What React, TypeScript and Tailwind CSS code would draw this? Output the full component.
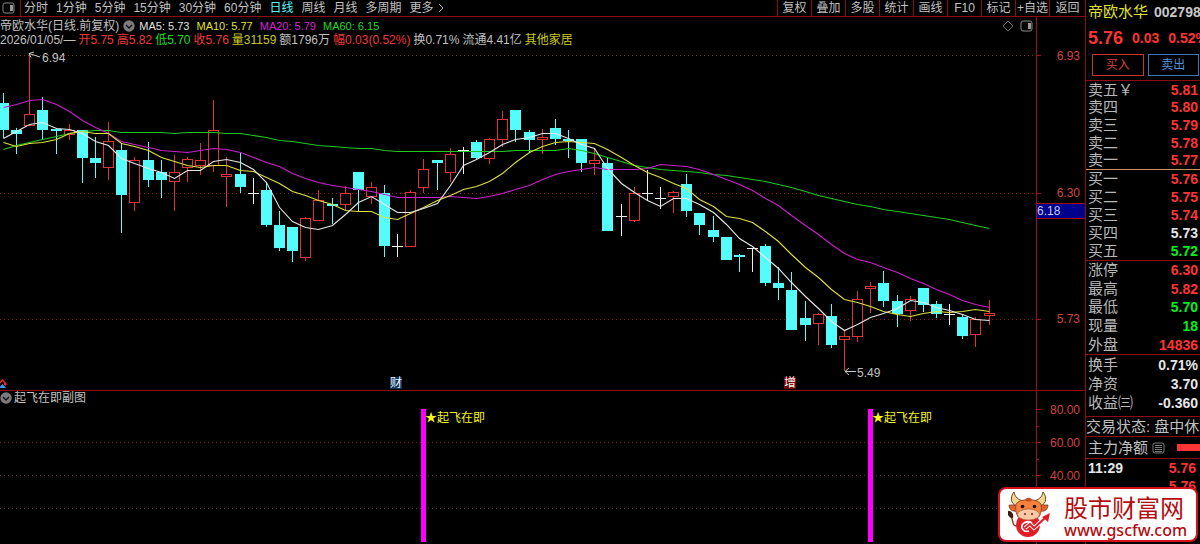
import React from "react";

type Kind = "c" | "r" | "w";
type Candle = [Kind, number, number, number, number];

// kind, high, body top, body bottom, low
const candles: Candle[] = [
  ["c", 93, 103, 130, 138], ["c", 128, 130, 134, 154], ["r", 53, 114, 125, 125], ["c", 97, 110, 130, 140],
  ["c", 128, 129, 131, 154], ["r", 124, 130, 134, 140], ["c", 130, 130, 158, 183], ["c", 137, 158, 163, 178],
  ["r", 122, 141, 167, 180], ["c", 143, 150, 195, 233], ["r", 157, 160, 202, 211], ["c", 142, 160, 180, 187],
  ["c", 160, 172, 180, 198], ["r", 155, 172, 181, 211], ["r", 157, 159, 167, 182], ["r", 143, 160, 165, 175],
  ["r", 100, 130, 165, 172], ["r", 157, 174, 176, 207], ["c", 152, 174, 187, 193], ["w", 178, 193, 193, 204],
  ["c", 182, 190, 225, 227], ["c", 211, 225, 248, 251], ["c", 227, 227, 251, 262], ["r", 217, 218, 257, 261],
  ["r", 190, 200, 220, 221], ["c", 198, 204, 206, 224], ["r", 186, 193, 204, 210], ["c", 172, 172, 190, 211],
  ["r", 182, 187, 196, 204], ["c", 185, 193, 246, 257], ["w", 234, 246, 246, 257], ["r", 190, 192, 246, 246],
  ["r", 159, 169, 187, 193], ["c", 160, 160, 163, 190], ["r", 148, 154, 172, 182], ["w", 147, 150, 150, 174],
  ["c", 140, 142, 158, 160], ["r", 138, 139, 158, 164], ["r", 111, 119, 139, 147], ["c", 110, 110, 130, 142],
  ["c", 130, 132, 140, 153], ["r", 129, 137, 139, 154], ["c", 119, 128, 139, 145], ["c", 130, 139, 141, 158],
  ["c", 139, 139, 163, 172], ["r", 149, 160, 163, 175], ["c", 158, 163, 231, 231], ["w", 204, 216, 216, 236],
  ["r", 187, 193, 220, 222], ["w", 170, 193, 193, 201], ["w", 187, 198, 198, 209], ["r", 191, 192, 196, 213],
  ["c", 174, 184, 211, 217], ["c", 213, 213, 225, 235], ["c", 216, 230, 237, 242], ["c", 237, 237, 260, 260],
  ["c", 254, 255, 257, 272], ["w", 248, 248, 248, 272], ["c", 244, 246, 283, 286], ["c", 267, 283, 288, 300],
  ["c", 272, 290, 330, 330], ["c", 301, 318, 325, 341], ["r", 313, 314, 323, 345], ["c", 304, 316, 345, 348],
  ["r", 330, 336, 339, 371], ["r", 291, 299, 336, 342], ["r", 282, 286, 288, 313], ["c", 271, 283, 301, 307],
  ["c", 295, 301, 314, 327], ["r", 296, 299, 310, 321], ["c", 288, 288, 305, 312], ["c", 301, 304, 314, 318],
  ["w", 304, 314, 314, 325], ["c", 315, 317, 336, 339], ["r", 317, 319, 334, 347], ["r", 300, 313, 315, 325],
];

const ma5 = [
  138, 131, 124, 122, 128, 129, 133, 141, 145, 158, 163, 168, 172, 178, 170, 170, 161, 159, 162, 169, 182, 207, 221,
  227, 229, 225, 214, 202, 196, 204, 212, 212, 208, 203, 185, 165, 159, 152, 144, 139, 137, 133, 133, 138, 144, 148,
  168, 183, 192, 200, 206, 198, 198, 204, 212, 224, 238, 246, 257, 268, 282, 296, 308, 321, 330, 324, 317, 313, 308,
  300, 302, 307, 310, 314, 319, 320,
];
const ma10 = [
  142, 146, 143, 142, 139, 133, 131, 133, 133, 143, 146, 150, 157, 161, 165, 167, 165, 165, 170, 171, 177, 183, 191,
  195, 200, 204, 210, 211, 211, 217, 219, 213, 207, 200, 195, 189, 186, 181, 173, 162, 152, 146, 142, 141, 142, 143,
  149, 157, 165, 172, 177, 183, 188, 199, 206, 216, 218, 222, 231, 241, 254, 267, 277, 289, 299, 302, 306, 311, 314,
  316, 313, 311, 312, 311, 309, 311,
];
const ma20 = [
  107, 104, 100, 99, 104, 111, 120, 127, 133, 141, 144, 147, 150, 151, 152, 150, 148, 149, 152, 157, 162, 166, 173,
  178, 182, 185, 187, 189, 191, 194, 197, 197, 197, 197, 196, 197, 198, 196, 193, 189, 185, 179, 174, 171, 169, 167,
  169, 169, 169, 168, 164, 165, 166, 169, 174, 179, 184, 190, 198, 205, 215, 225, 234, 244, 253, 259, 262, 267, 272,
  278, 283, 289, 294, 300, 304, 307,
];
const ma60 = [
  149, 145, 142, 139, 136, 133, 131, 130, 130, 132, 132, 132, 132, 133, 132, 132, 132, 133, 133, 135, 137, 140, 141,
  143, 145, 146, 147, 148, 148, 150, 151, 151, 151, 151, 151, 151, 151, 151, 151, 150, 150, 150, 150, 148, 150, 153,
  157, 161, 165, 167, 169, 170, 171, 172, 174, 175, 177, 179, 181, 184, 187, 191, 195, 198, 201, 204, 206, 209, 211,
  213, 215, 217, 219, 222, 225, 228,
];

const px = (i: number) => Math.round(3 + 13.14 * i);
const line = (ys: number[]) => ys.map((y, i) => `${px(i) + 0.5},${y + 0.5}`).join(" ");

const periods = ["分时", "1分钟", "5分钟", "15分钟", "30分钟", "60分钟", "日线", "周线", "月线", "多周期"];
const tools = ["复权", "叠加", "多股", "统计", "画线", "F10", "标记", "+自选", "返回"];

const RED = "text-[#ff3434]";
const GREEN = "text-[#00f020]";
const WHITE = "text-[#e6e6e6]";

type Row = [string, string, string];
const sells: Row[] = [
  ["卖五￥", "5.81", RED], ["卖四", "5.80", RED], ["卖三", "5.79", RED], ["卖二", "5.78", RED], ["卖一", "5.77", RED],
];
const buys: Row[] = [
  ["买一", "5.76", RED], ["买二", "5.75", RED], ["买三", "5.74", RED], ["买四", "5.73", WHITE], ["买五", "5.72", GREEN],
];
const stats: Row[] = [
  ["涨停", "6.30", RED], ["最高", "5.82", RED], ["最低", "5.70", GREEN], ["现量", "18", GREEN], ["外盘", "14836", RED],
];
const ratios: Row[] = [
  ["换手", "0.71%", WHITE], ["净资", "3.70", WHITE], ["收益㈢", "-0.360", WHITE],
];
const ticks: [string, string][] = [["11:29", "5.76"], ["", "5.76"]];

function Rows({ rows, className }: { rows: Row[]; className: string }) {
  return (
    <dl className={`flex flex-col ${className}`}>
      {rows.map(([label, value, tone]) => (
        <div key={label} className="flex flex-1 items-center justify-between pr-0.5 pl-0.5">
          <dt className="text-[15px] leading-4 text-[#b8b8b8]">{label}</dt>
          <dd className={`text-sm leading-4 font-bold ${tone}`}>{value}</dd>
        </div>
      ))}
    </dl>
  );
}

function ChevronDisc() {
  return (
    <svg viewBox="0 0 12 12" className="size-3 shrink-0" aria-hidden="true">
      <circle cx="6" cy="6" r="5.7" fill="#7c7c7c" />
      <path d="M3 5l3 3 3-3" fill="none" stroke="#111" strokeWidth="1.4" />
    </svg>
  );
}

function PaneIcon() {
  return (
    <svg viewBox="0 0 13 12" className="h-3 w-[13px] shrink-0" aria-hidden="true">
      <rect x="1" y="1" width="11" height="10" rx="2" fill="none" stroke="#8a8a8a" />
      <rect x="8" y="3" width="3" height="6" fill="#9a9a9a" />
    </svg>
  );
}

function PriceChart() {
  return (
    <svg viewBox="0 47 1036 343" preserveAspectRatio="xMinYMin meet" className="block min-h-0 w-full flex-1">
      <g strokeDasharray="1 3" shapeRendering="crispEdges">
        <path d="M0 55.5H1036" stroke="#704038" />
        <path d="M0 193.5H1036" stroke="#8a1818" />
        <path d="M0 319.5H1036" stroke="#8a1818" />
      </g>
      <g shapeRendering="crispEdges">
        {candles.map(([kind, hi, top, bot, lo], i) => {
          const x = px(i);
          if (kind === "w")
            return <path key={i} d={`M${x + 0.5} ${hi}V${lo}M${x - 5} ${top + 0.5}h11`} stroke="#f0f0f0" />;
          if (kind === "c")
            return (
              <g key={i}>
                <path d={`M${x + 0.5} ${hi}V${lo}`} stroke="#54fcfc" />
                <rect x={x - 5} y={top} width="11" height={bot - top} fill="#54fcfc" />
              </g>
            );
          return (
            <g key={i}>
              <path d={`M${x + 0.5} ${hi}V${top}M${x + 0.5} ${bot}V${lo}`} stroke="#e03434" />
              <rect x={x - 4.5} y={top + 0.5} width="10" height={bot - top} fill="#000" stroke="#e03434" />
            </g>
          );
        })}
      </g>
      <g fill="none" strokeWidth="1.1">
        <polyline points={line(ma60)} stroke="#22c822" />
        <polyline points={line(ma20)} stroke="#cc20cc" />
        <polyline points={line(ma10)} stroke="#e0e040" />
        <polyline points={line(ma5)} stroke="#e8e8e8" />
      </g>
      <g fill="none" stroke="#c8c8c8">
        <path d="M40 57L29 53.5M34 52l-5 1.5 2 4" />
        <path d="M856 371.5H845M849 368l-4 3.5 4 3.5" />
      </g>
      <g fill="#c0c0c0" fontSize="12">
        <text x="42" y="62">6.94</text>
        <text x="857" y="377">5.49</text>
      </g>
      <rect x="390" y="377" width="12" height="12" fill="#0c3462" />
      <rect x="784" y="377" width="12" height="12" fill="#700008" />
      <g fill="#f0f0f0" fontSize="12">
        <text x="390" y="387">财</text>
        <text x="784" y="387">增</text>
      </g>
      <path d="M-1 384l3.500-4 3.500 4h-2l2 1" fill="none" stroke="#e02828" strokeWidth="1.5" />
      <path d="M-1 388l3.500-4 3.500 4z" fill="#3c9cf0" />
    </svg>
  );
}

function PriceAxis() {
  return (
    <svg viewBox="1036 17 49 373" preserveAspectRatio="xMinYMin meet" className="block h-full w-[49px] shrink-0">
      <g shapeRendering="crispEdges" stroke="#9c1016">
        <path d="M1036.500 17V3000M1037 55.500h4M1037 193.500h4M1037 319.500h4" />
        <rect x="1036.500" y="203.500" width="49" height="15" fill="#00008c" />
      </g>
      <g fill="#d24444" fontSize="12" textAnchor="end">
        <text x="1080" y="60">6.93</text>
        <text x="1080" y="197">6.30</text>
        <text x="1080" y="323">5.73</text>
      </g>
      <text x="1037" y="215" fill="#c8c8f0" fontSize="12">6.18</text>
    </svg>
  );
}

function SignalChart() {
  return (
    <svg viewBox="0 405 1036 139" preserveAspectRatio="xMinYMin meet" className="block min-h-0 w-full flex-1">
      <g strokeDasharray="1 3" shapeRendering="crispEdges">
        <path d="M0 442.500H1036" stroke="#7a1616" />
        <path d="M0 475.500H1036" stroke="#583030" />
        <path d="M0 508.500H1036" stroke="#583030" />
      </g>
      <g fill="#ff00ff">
        <rect x="421" y="409" width="5" height="133" />
        <rect x="868" y="409" width="5" height="133" />
      </g>
      <g fill="#f4f420" fontSize="12">
        <text x="425" y="422">★起飞在即</text>
        <text x="872" y="422">★起飞在即</text>
      </g>
    </svg>
  );
}

function SignalAxis() {
  return (
    <svg viewBox="1036 391 49 153" preserveAspectRatio="xMinYMin meet" className="block h-full w-[49px] shrink-0">
      <path
        d="M1036.500 391V544M1037 409.500h4M1037 426.500h2M1037 442.500h4M1037 459.500h2M1037 475.500h4M1037 508.500h4"
        shapeRendering="crispEdges"
        stroke="#9c1016"
      />
      <g fill="#d24444" fontSize="12" textAnchor="end">
        <text x="1080" y="414">80.00</text>
        <text x="1080" y="447">60.00</text>
        <text x="1080" y="480">40.00</text>
      </g>
    </svg>
  );
}

function Bull() {
  return (
    <svg viewBox="0 0 44 46" className="h-[46px] w-11 shrink-0" aria-hidden="true">
      <path d="M9 34C3 34 6 28 3 25" fill="none" stroke="#8a3c1c" strokeWidth="1.500" />
      <path d="M0 19c4 0 6 3 5 7-4 0-6-3-5-7z" fill="#3a1c14" />
      <circle cx="20" cy="33" r="12" fill="#e01c24" />
      <path d="M12 15C3 14 1 6 6 0c1 5 4 8 10 9zM29 15c9-1 11-9 6-15-1 5-4 8-10 9z" fill="#f2d694" stroke="#70401c" />
      <path d="M8 13l-7 0c0 5 4 7 8 6zM33 13l7 0c0 5-4 7-8 6z" fill="#e0622c" stroke="#70301c" strokeWidth=".7" />
      <path d="M8 12c4-6 21-6 25 0 1 5 0 10-2 13H10c-2-3-3-8-2-13z" fill="#f4823c" stroke="#80381c" strokeWidth=".7" />
      <path d="M17 8c1-3 6-3 7 0-2 2-5 2-7 0z" fill="#c84c20" />
      <ellipse cx="20.500" cy="22.500" rx="11" ry="5.500" fill="#fbc8a4" stroke="#a0502c" strokeWidth=".6" />
      <circle cx="14.500" cy="14.500" r="1.800" fill="#201010" />
      <circle cx="26.500" cy="14.500" r="1.800" fill="#201010" />
      <circle cx="17" cy="22" r="1.100" fill="#70301c" />
      <circle cx="24" cy="22" r="1.100" fill="#70301c" />
      <path d="M24 31c-5-3-11 0-10 5 1 3 4 4 7 3" fill="none" stroke="#fff" strokeWidth="1.800" />
      <path d="M17 36l5-4 4 4 10-9" fill="none" stroke="#fff" strokeWidth="4" />
      <path d="M17 36l5-4 4 4 11-10" fill="none" stroke="#e01c24" strokeWidth="2" />
      <path d="M42 21l-2 9-6-5z" fill="#e01c24" />
    </svg>
  );
}

export default function App() {
  return (
    <div className="relative flex h-screen min-h-[544px] overflow-hidden bg-black font-['Liberation_Sans','Noto_Sans_CJK_SC',sans-serif] text-xs leading-[14px] text-[#c0c0c0]">
      <main className="flex min-w-0 flex-1 flex-col">
        <nav className="flex h-[17px] shrink-0 justify-between border-b border-[#8c0c12]">
          <div className="flex items-center whitespace-nowrap">
            <button type="button" aria-label="切换侧栏" className="flex h-full w-[21px] items-center border-r border-[#8c0c12] pl-0.5">
              <PaneIcon />
            </button>
            <div className="flex gap-2 pl-[3px]">
              {periods.map((p) => (
                <button type="button" key={p} className={p === "日线" ? "text-[#54fcfc]" : ""}>
                  {p}
                </button>
              ))}
              <button type="button" className="flex items-center gap-1">
                更多
                <svg viewBox="0 0 6 10" className="h-2.5 w-1.5" aria-hidden="true">
                  <path d="M1 1l4 4-4 4" fill="none" stroke="#b0b0b0" />
                </svg>
              </button>
            </div>
          </div>
          <div className="flex whitespace-nowrap">
            {tools.map((t) => (
              <button type="button" key={t} className="w-[34px] border-l border-[#8c0c12] last:w-9">
                {t}
              </button>
            ))}
          </div>
        </nav>

        <section className="flex min-h-0 flex-1 border-b border-[#8c0c12]">
          <div className="flex min-w-0 flex-1 flex-col pt-0.5">
            <div className="flex h-3.5 items-center justify-between whitespace-nowrap">
              <div className="flex items-center gap-1">
                <h1>帝欧水华(日线.前复权)</h1>
                <ChevronDisc />
                <div className="flex gap-[7px] text-[11px]">
                  <span className="text-[#e0e0e0]">MA5: 5.73</span>
                  <span className="text-[#e0e030]">MA10: 5.77</span>
                  <span className="text-[#d824d8]">MA20: 5.79</span>
                  <span className="text-[#20dc20]">MA60: 6.15</span>
                </div>
              </div>
              <div className="flex items-center gap-1.5 pr-[3px]">
                <svg viewBox="0 0 12 12" className="size-3" aria-hidden="true">
                  <path d="M6 1l5 5-5 5-5-5z" fill="none" stroke="#6c6c6c" />
                </svg>
                <PaneIcon />
              </div>
            </div>
            <div className="flex h-3.5 shrink-0 items-center gap-[3px] whitespace-nowrap">
              <span>2026/01/05/—</span>
              <span className="text-[#f03838]">开5.75</span>
              <span className="text-[#f03838]">高5.82</span>
              <span className="text-[#20dc20]">低5.70</span>
              <span className="text-[#f03838]">收5.76</span>
              <span className="text-[#c8c820]">量31159</span>
              <span>额1796万</span>
              <span className="text-[#f03838]">幅0.03(0.52%)</span>
              <span>换0.71%</span>
              <span>流通4.41亿</span>
              <span className="text-[#c8c820]">其他家居</span>
            </div>
            <PriceChart />
          </div>
          <PriceAxis />
        </section>

        <section className="flex h-[153px] shrink-0">
          <div className="flex min-w-0 flex-1 flex-col">
            <div className="flex h-3.5 shrink-0 items-center gap-0.5">
              <ChevronDisc />
              <h2>起飞在即副图</h2>
            </div>
            <SignalChart />
          </div>
          <SignalAxis />
        </section>
      </main>

      <aside className="flex w-[115px] shrink-0 flex-col overflow-hidden border-l border-[#8c0c12] whitespace-nowrap">
        <header className="flex h-20 shrink-0 flex-col">
          <div className="flex h-6 items-center gap-1.5 pl-0.5">
            <span className="text-[15px] text-[#e0e030]">帝欧水华</span>
            <span className="text-sm font-bold text-[#c8c8c8]">002798</span>
          </div>
          <div className={`flex h-7 items-center gap-[9px] pl-0.5 text-sm font-bold ${RED}`}>
            <span className="text-lg">5.76</span>
            <span>0.03</span>
            <span>0.52%</span>
          </div>
          <div className="flex gap-1 pt-0.5 pr-px pl-1.5">
            <button type="button" className="h-[22px] flex-1 border border-[#c83434] text-[#d84040]">
              买入
            </button>
            <button type="button" className="h-[22px] flex-1 border border-[#3c78b4] text-[#4c94dc]">
              卖出
            </button>
          </div>
        </header>
        <Rows rows={sells} className="h-[89px] shrink-0 border-t border-[#8c0c12]" />
        <Rows rows={buys} className="h-[91px] shrink-0 border-t border-[#d09068]" />
        <Rows rows={stats} className="h-[94px] shrink-0 border-t border-[#8c0c12]" />
        <Rows rows={ratios} className="h-[62px] shrink-0 border-t border-[#8c0c12] pb-1" />
        <p className="flex h-5 shrink-0 items-center border-t border-[#8c0c12] text-[15px]">交易状态: 盘中休</p>
        <div className="flex h-[22px] shrink-0 items-center border-t border-[#8c0c12] pl-0.5">
          <span className="text-[15px]">主力净额</span>
          <svg viewBox="0 0 13 12" className="ml-1 h-3 w-[13px] shrink-0" aria-hidden="true">
            <rect x="1" y="1" width="11" height="10" rx="2" fill="none" stroke="#7c7c7c" />
            <path d="M3 3.500h7M3 5.500h7M3 7.500h7M3 9.500h7" stroke="#7c7c7c" />
          </svg>
          <span className="ml-3 h-[7px] flex-1 bg-[#ff3434]" />
        </div>
        <table className="w-full shrink-0 border-t border-[#8c0c12] text-sm leading-4 font-bold">
          <tbody>
            {ticks.map(([time, price], i) => (
              <tr key={i} className="h-[18px]">
                <td className={`p-0 pl-0.5 ${WHITE}`}>{time}</td>
                <td className={`p-0 pr-1 text-right ${RED}`}>{price}</td>
              </tr>
            ))}
          </tbody>
        </table>
      </aside>

      <a
        href="#home"
        className="absolute right-0.5 bottom-0.5 flex h-[55px] w-[200px] items-center gap-3 rounded-lg border-2 border-[#d4101c] bg-white pl-2 text-[#b40c10]"
      >
        <Bull />
        <span className="flex flex-col pt-1">
          <span className="text-2xl leading-[26px]">股市财富网</span>
          <span className="font-['Noto_Sans'] text-base leading-4 font-medium">www.gscfw.com</span>
        </span>
      </a>
    </div>
  );
}
